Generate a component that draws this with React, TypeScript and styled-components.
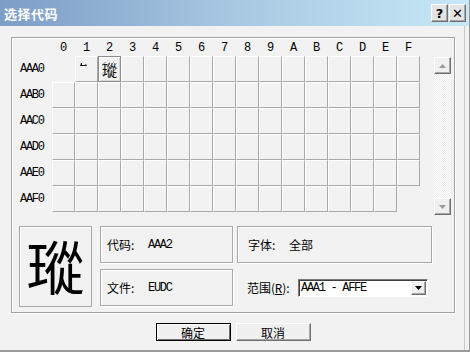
import { Fragment } from "react"
import styled, { createGlobalStyle, css } from "styled-components"

const GlobalStyle = createGlobalStyle`
    html, body {
        margin: 0;
        padding: 0;
        background: #f2f2f2;
    }
    * {
        box-sizing: border-box;
    }
`

const cjk = `"Noto Sans CJK SC", "Noto Sans", sans-serif`
const mono = `"Liberation Mono", "Noto Sans CJK SC", monospace`

const raised = css`
    border-style: solid;
    border-width: 1px;
    border-color: #ffffff #6f6f6f #6f6f6f #ffffff;
    box-shadow: inset -1px -1px 0 #a8a8a8;
`

const Window = styled.div`
    width: 470px;
    height: 352px;
    background: #f2f2f2;
    display: flex;
    flex-direction: column;
    border-right: 1px solid #9a9a9a;
    border-bottom: 2px solid #9a9a9a;
    box-shadow: inset -4px 0 0 #f2f2f2, inset -5px 0 0 #c8c8c8;
`

const TitleBar = styled.div`
    height: 26px;
    flex: none;
    display: flex;
    align-items: center;
    justify-content: space-between;
    padding: 0 3px 0 4px;
    background: linear-gradient(to right, #7c9dc6, #a8c8e2 50%, #c7e8f6);
    .title {
        color: #ffffff;
        font-family: ${cjk};
        font-weight: 700;
        font-size: 13px;
        letter-spacing: 0.5px;
    }
    .controls {
        display: flex;
        gap: 1px;
    }
`

const CaptionButton = styled.div`
    width: 17px;
    height: 18px;
    background: #e4e4e4;
    ${raised};
    display: flex;
    align-items: center;
    justify-content: center;
    font-family: "DejaVu Sans", sans-serif;
    font-weight: 700;
    font-size: 13px;
    color: #000;
`

const Body = styled.div`
    padding: 11px 14px 0 11px;
    display: flex;
    flex-direction: column;
`

const Frame = styled.div`
    height: 276px;
    border: 1px solid #a3a3a3;
    box-shadow: 1px 1px 0 #ffffff, inset 1px 1px 0 #ffffff;
    display: flex;
    flex-direction: column;
`

const TopArea = styled.div`
    display: flex;
`

const Table = styled.div`
    display: grid;
    grid-template-columns: 40px repeat(16, 23px);
    grid-template-rows: 18px repeat(6, 26px);
`

const ColHead = styled.div`
    font-family: ${mono};
    font-size: 12px;
    color: #000;
    display: flex;
    align-items: center;
    justify-content: center;
    padding-top: 1px;
`

const RowHead = styled.div`
    font-family: ${mono};
    font-size: 12px;
    letter-spacing: -1.3px;
    color: #000;
    display: flex;
    align-items: center;
    padding-left: 8px;
`

const Cell = styled.div<{ $empty?: boolean; $selected?: boolean }>`
    position: relative;
    background: #f2f2f2;
    border-top: 1px solid #ffffff;
    border-left: 1px solid #ffffff;
    border-right: 1px solid #a9a9a9;
    border-bottom: 1px solid #a9a9a9;
    display: flex;
    align-items: center;
    justify-content: center;
    ${p => p.$empty && css`
        border-color: transparent;
    `}
    ${p => p.$selected && css`
        border: 1px solid #8c8c8c;
        box-shadow: inset 1px 1px 0 #ffffff, inset -1px -1px 0 #d8d8d8;
    `}
`

const TinyMark = styled.svg`
    position: absolute;
    left: 4px;
    top: 6px;
`

const SmallGlyph = styled.span`
    position: relative;
    font-family: ${cjk};
    font-size: 15px;
    line-height: 15px;
    color: #111;
    &::after {
        content: "";
        position: absolute;
        inset: 0;
        background: repeating-linear-gradient(135deg, transparent 0 2px, rgba(60, 60, 60, 0.35) 2px 3px);
    }
`

const Scrollbar = styled.div`
    width: 17px;
    height: 158px;
    margin: 19px 0 0 14px;
    display: flex;
    flex-direction: column;
    justify-content: space-between;
    background-color: #ffffff;
    background-image: conic-gradient(#ececec 25%, #ffffff 0 50%, #ececec 0 75%, #ffffff 0);
    background-size: 2px 2px;
`

const ArrowButton = styled.div`
    width: 17px;
    height: 17px;
    background: #f0f0f0;
    ${raised};
    display: flex;
    align-items: center;
    justify-content: center;
`

const BottomArea = styled.div`
    display: flex;
    margin-top: 11px;
    padding-left: 7px;
`

const BigChar = styled.div`
    width: 73px;
    height: 81px;
    border: 1px solid #a8a8a8;
    box-shadow: inset 1px 1px 0 #ffffff;
    display: flex;
    align-items: center;
    justify-content: center;
    font-family: ${cjk};
    font-size: 58px;
    line-height: 1;
    color: #000;
    padding-bottom: 4px;
`

const Column = styled.div<{ $width: number; $gap: number }>`
    width: ${p => p.$width}px;
    margin-left: ${p => p.$gap}px;
    display: flex;
    flex-direction: column;
    gap: 6px;
`

const InfoBox = styled.div<{ $indent: number }>`
    height: 37px;
    border: 1px solid #a8a8a8;
    box-shadow: inset 1px 1px 0 #ffffff, 1px 1px 0 #ffffff;
    display: flex;
    align-items: center;
    padding-left: ${p => p.$indent}px;
`

const Label = styled.span<{ $width: number }>`
    font-family: ${cjk};
    font-size: 12px;
    color: #000;
    width: ${p => p.$width}px;
    flex: none;
    white-space: nowrap;
    u {
        font-family: ${mono};
    }
`

const Value = styled.span<{ $cjk?: boolean }>`
    font-family: ${p => (p.$cjk ? cjk : mono)};
    font-size: 12px;
    letter-spacing: ${p => (p.$cjk ? "0" : "-1.3px")};
    color: #000;
`

const RangeRow = styled.div`
    display: flex;
    align-items: center;
    height: 37px;
    padding-left: 10px;
`

const Combo = styled.div`
    width: 130px;
    height: 18px;
    background: #ffffff;
    border-style: solid;
    border-width: 1px;
    border-color: #7a7a7a #ffffff #ffffff #7a7a7a;
    box-shadow: inset 1px 1px 0 #404040;
    display: flex;
    align-items: center;
    justify-content: space-between;
    padding: 0 1px 0 2px;
    font-family: ${mono};
    font-size: 12px;
    letter-spacing: -1.3px;
    .drop {
        width: 15px;
        height: 14px;
        background: #f0f0f0;
        ${raised};
        display: flex;
        align-items: center;
        justify-content: center;
    }
`

const ButtonRow = styled.div`
    display: flex;
    justify-content: center;
    gap: 5px;
    margin-top: 10px;
`

const PushButton = styled.div<{ $default?: boolean }>`
    width: 75px;
    height: 18px;
    background: #f0f0f0;
    ${raised};
    display: flex;
    align-items: center;
    justify-content: center;
    font-family: ${cjk};
    font-size: 12px;
    color: #000;
    ${p => p.$default && css`
        border: 1px solid #000;
        box-shadow: inset 1px 1px 0 #ffffff, inset -1px -1px 0 #6f6f6f;
    `}
`

const Tri = ({ up, color }: { up?: boolean; color: string }) => (
    <svg width="7" height="4" viewBox="0 0 7 4">
        <path d={up ? "M3.5 0 L7 4 L0 4 Z" : "M0 0 L7 0 L3.5 4 Z"} fill={color} />
    </svg>
)

const cols = ["0", "1", "2", "3", "4", "5", "6", "7", "8", "9", "A", "B", "C", "D", "E", "F"]
const rows = ["AAA0", "AAB0", "AAC0", "AAD0", "AAE0", "AAF0"]

const App = () => {
    return (
        <Window>
            <GlobalStyle />
            <TitleBar>
                <span className="title">选择代码</span>
                <div className="controls">
                    <CaptionButton>?</CaptionButton>
                    <CaptionButton>✕</CaptionButton>
                </div>
            </TitleBar>
            <Body>
                <Frame>
                    <TopArea>
                        <Table>
                            <div />
                            {cols.map(c => (
                                <ColHead key={c}>{c}</ColHead>
                            ))}
                            {rows.map((r, ri) => (
                                <Fragment key={r}>
                                    <RowHead>{r}</RowHead>
                                    {cols.map((c, ci) => {
                                        const empty = (ri === 0 && ci === 0) || (ri === 5 && ci === 15)
                                        const selected = ri === 0 && ci === 2
                                        return (
                                            <Cell key={c} $empty={empty} $selected={selected}>
                                                {ri === 0 && ci === 1 && (
                                                    <TinyMark width="7" height="4" viewBox="0 0 7 4">
                                                        <path d="M1 0 L2 0 L2 2 L5 2 L6 1 L7 3 L0 3 Z" fill="#111" />
                                                    </TinyMark>
                                                )}
                                                {selected && <SmallGlyph>瑽</SmallGlyph>}
                                            </Cell>
                                        )
                                    })}
                                </Fragment>
                            ))}
                        </Table>
                        <Scrollbar>
                            <ArrowButton><Tri up color="#9a9a9a" /></ArrowButton>
                            <ArrowButton><Tri color="#9a9a9a" /></ArrowButton>
                        </Scrollbar>
                    </TopArea>
                    <BottomArea>
                        <BigChar>瑽</BigChar>
                        <Column $width={133} $gap={8}>
                            <InfoBox $indent={6}>
                                <Label $width={41}>代码:</Label>
                                <Value>AAA2</Value>
                            </InfoBox>
                            <InfoBox $indent={6}>
                                <Label $width={41}>文件:</Label>
                                <Value>EUDC</Value>
                            </InfoBox>
                        </Column>
                        <Column $width={195} $gap={4}>
                            <InfoBox $indent={10}>
                                <Label $width={41}>字体:</Label>
                                <Value $cjk>全部</Value>
                            </InfoBox>
                            <RangeRow>
                                <Label $width={51}>范围(<u>R</u>):</Label>
                                <Combo>
                                    <span>AAA1 - AFFE</span>
                                    <div className="drop"><Tri color="#000" /></div>
                                </Combo>
                            </RangeRow>
                        </Column>
                    </BottomArea>
                </Frame>
                <ButtonRow>
                    <PushButton $default>确定</PushButton>
                    <PushButton>取消</PushButton>
                </ButtonRow>
            </Body>
        </Window>
    )
}

export default App
